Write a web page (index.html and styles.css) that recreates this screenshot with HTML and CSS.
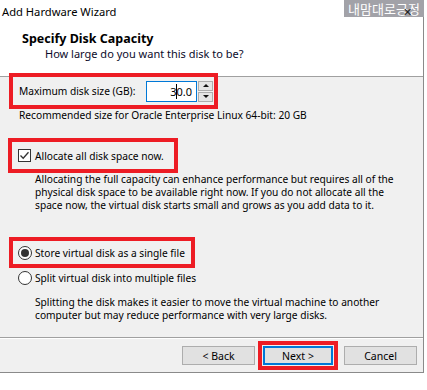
FILE: index.html
```html
<!DOCTYPE html>
<html lang="en">
<head>
    <meta charset="UTF-8">
    <meta name="viewport" content="width=device-width, initial-scale=1.0">
    <title>Add Hardware Wizard</title>
    <link rel="stylesheet" href="styles.css">
</head>
<body>
    <div class="window">
        <div class="titlebar">
            Add Hardware Wizard
            <div class="stamp">내맘대로긍정</div>
            <div class="close">✕</div>
        </div>
        <div class="header">
            <h1>Specify Disk Capacity</h1>
            <p>How large do you want this disk to be?</p>
        </div>
        <div class="content">
            <div class="mark size-row">
                <span class="label">Maximum disk size (GB):</span>
                <div class="field">3<span class="caret"></span>0.0</div>
                <div class="spin">
                    <div class="spin-btn"><span class="up"></span></div>
                    <div class="spin-btn"><span class="down"></span></div>
                </div>
            </div>
            <div class="hint">Recommended size for Oracle Enterprise Linux 64-bit: 20 GB</div>

            <div class="mark alloc-row">
                <span class="check">
                    <svg width="11" height="11" viewBox="0 0 11 11"><path d="M1.5 5.5 L4.2 8.3 L9.5 2.2" fill="none" stroke="#333" stroke-width="1.3"/></svg>
                </span>
                <span>Allocate all disk space now.</span>
            </div>
            <p class="desc">Allocating the full capacity can enhance performance but requires all of the physical disk space to be available right now. If you do not allocate all the space now, the virtual disk starts small and grows as you add data to it.</p>

            <div class="mark single-row">
                <span class="radio on"></span>
                <span>Store virtual disk as a single file</span>
            </div>
            <div class="option">
                <span class="radio"></span>
                <span>Split virtual disk into multiple files</span>
            </div>
            <p class="desc split">Splitting the disk makes it easier to move the virtual machine to another computer but may reduce performance with very large disks.</p>
        </div>
        <div class="footer">
            <button class="btn">&lt; Back</button>
            <span class="mark next-mark"><button class="btn next">Next &gt;</button></span>
            <button class="btn cancel">Cancel</button>
        </div>
    </div>
</body>
</html>
```

FILE: styles.css
```css
* {
    margin: 0;
    padding: 0;
    box-sizing: border-box;
}
body {
    background-color: #fff;
    font-family: 'Noto Sans', sans-serif;
    font-size: 10.2px;
    color: #000;
}
.window {
    width: 424px;
    height: 373px;
    background-color: #f0f0f0;
    border-right: 1px solid #8a8a8a;
    border-bottom: 1px solid #8a8a8a;
    display: flex;
    flex-direction: column;
}
.titlebar {
    position: relative;
    height: 24px;
    padding: 4px 0 0 2px;
    background-color: #fff;
    font-size: 11.2px;
    line-height: 16px;
}
.stamp {
    position: absolute;
    top: 0;
    right: -1px;
    width: 80px;
    height: 17px;
    background-color: #a2a2a8;
    color: #fff;
    font-family: 'Noto Sans CJK KR', sans-serif;
    font-size: 13px;
    line-height: 17px;
    text-align: center;
    white-space: nowrap;
}
.close {
    position: absolute;
    top: 6px;
    right: 11px;
    font-size: 11px;
    line-height: 11px;
    color: #222;
}
.header {
    height: 53px;
    padding: 7px 0 0 22px;
    background-color: #fff;
    border-bottom: 1px solid #a0a0a0;
}
.header h1 {
    font-size: 12.5px;
    font-weight: bold;
    line-height: 15px;
}
.header p {
    margin-left: 23px;
    font-size: 11px;
    line-height: 15px;
    color: #0b0b2a;
}
.content {
    flex: 1;
    display: flex;
    flex-direction: column;
    border-bottom: 1px solid #a0a0a0;
    box-shadow: 0 1px 0 #fff;
}
.mark {
    border: 4px solid #ed1c24;
}
.size-row {
    margin: -4px 0 0 9px;
    width: 209px;
    height: 36px;
    display: flex;
    align-items: center;
    padding: 0 1px 0 6px;
}
.size-row .label {
    flex: 1;
}
.field {
    width: 51px;
    height: 21px;
    border: 1px solid #0078d7;
    background-color: #fff;
    text-align: right;
    padding-right: 4px;
    line-height: 19px;
    font-size: 11px;
}
.caret {
    display: inline-block;
    width: 1px;
    height: 15px;
    margin-right: -1px;
    background-color: #000;
    vertical-align: -3px;
}
.spin {
    width: 15px;
    height: 21px;
    margin-left: 1px;
    display: flex;
    flex-direction: column;
    gap: 1px;
}
.spin-btn {
    flex: 1;
    border: 1px solid #adadad;
    background-color: #e5e5e5;
    display: flex;
    align-items: center;
    justify-content: center;
}
.up, .down {
    width: 0;
    height: 0;
    border-left: 3px solid transparent;
    border-right: 3px solid transparent;
}
.up {
    border-bottom: 3px solid #111;
}
.down {
    border-top: 3px solid #111;
}
.hint {
    margin: -1px 0 0 19px;
    line-height: 14px;
}
.alloc-row {
    margin: 16px 0 0 8px;
    width: 170px;
    height: 35px;
    display: flex;
    align-items: center;
    gap: 4px;
    padding-left: 6px;
}
.check {
    width: 13px;
    height: 13px;
    border: 1px solid #333;
    background-color: #fff;
    display: flex;
    align-items: center;
    justify-content: center;
}
.desc {
    margin: 0 0 0 35px;
    width: 365px;
    line-height: 13px;
}
.single-row {
    margin: 25px 0 0 9px;
    width: 186px;
    height: 31px;
    display: flex;
    align-items: center;
    gap: 3px;
    padding-left: 5px;
}
.radio {
    width: 14px;
    height: 14px;
    border: 1px solid #333;
    border-radius: 50%;
    background-color: #fff;
    display: flex;
    align-items: center;
    justify-content: center;
}
.radio.on::after {
    content: "";
    width: 8px;
    height: 8px;
    border-radius: 50%;
    background-color: #333;
}
.option {
    margin: 2px 0 0 18px;
    display: flex;
    align-items: center;
    gap: 3px;
    height: 16px;
}
.desc.split {
    margin-top: 10px;
}
.footer {
    height: 34px;
    padding: 3px 6px 0 0;
    display: flex;
    justify-content: flex-end;
    align-items: flex-start;
}
.btn {
    width: 73px;
    height: 19px;
    margin-top: 5px;
    border: 1px solid #adadad;
    background-color: #e1e1e1;
    font-family: 'Noto Sans', sans-serif;
    font-size: 10.5px;
    color: #000;
}
.next-mark {
    margin: 0 6px 0 3px;
    padding: 1px;
}
.btn.next {
    width: 70px;
    margin-top: 0;
    border: 2px solid #0078d7;
}
```
